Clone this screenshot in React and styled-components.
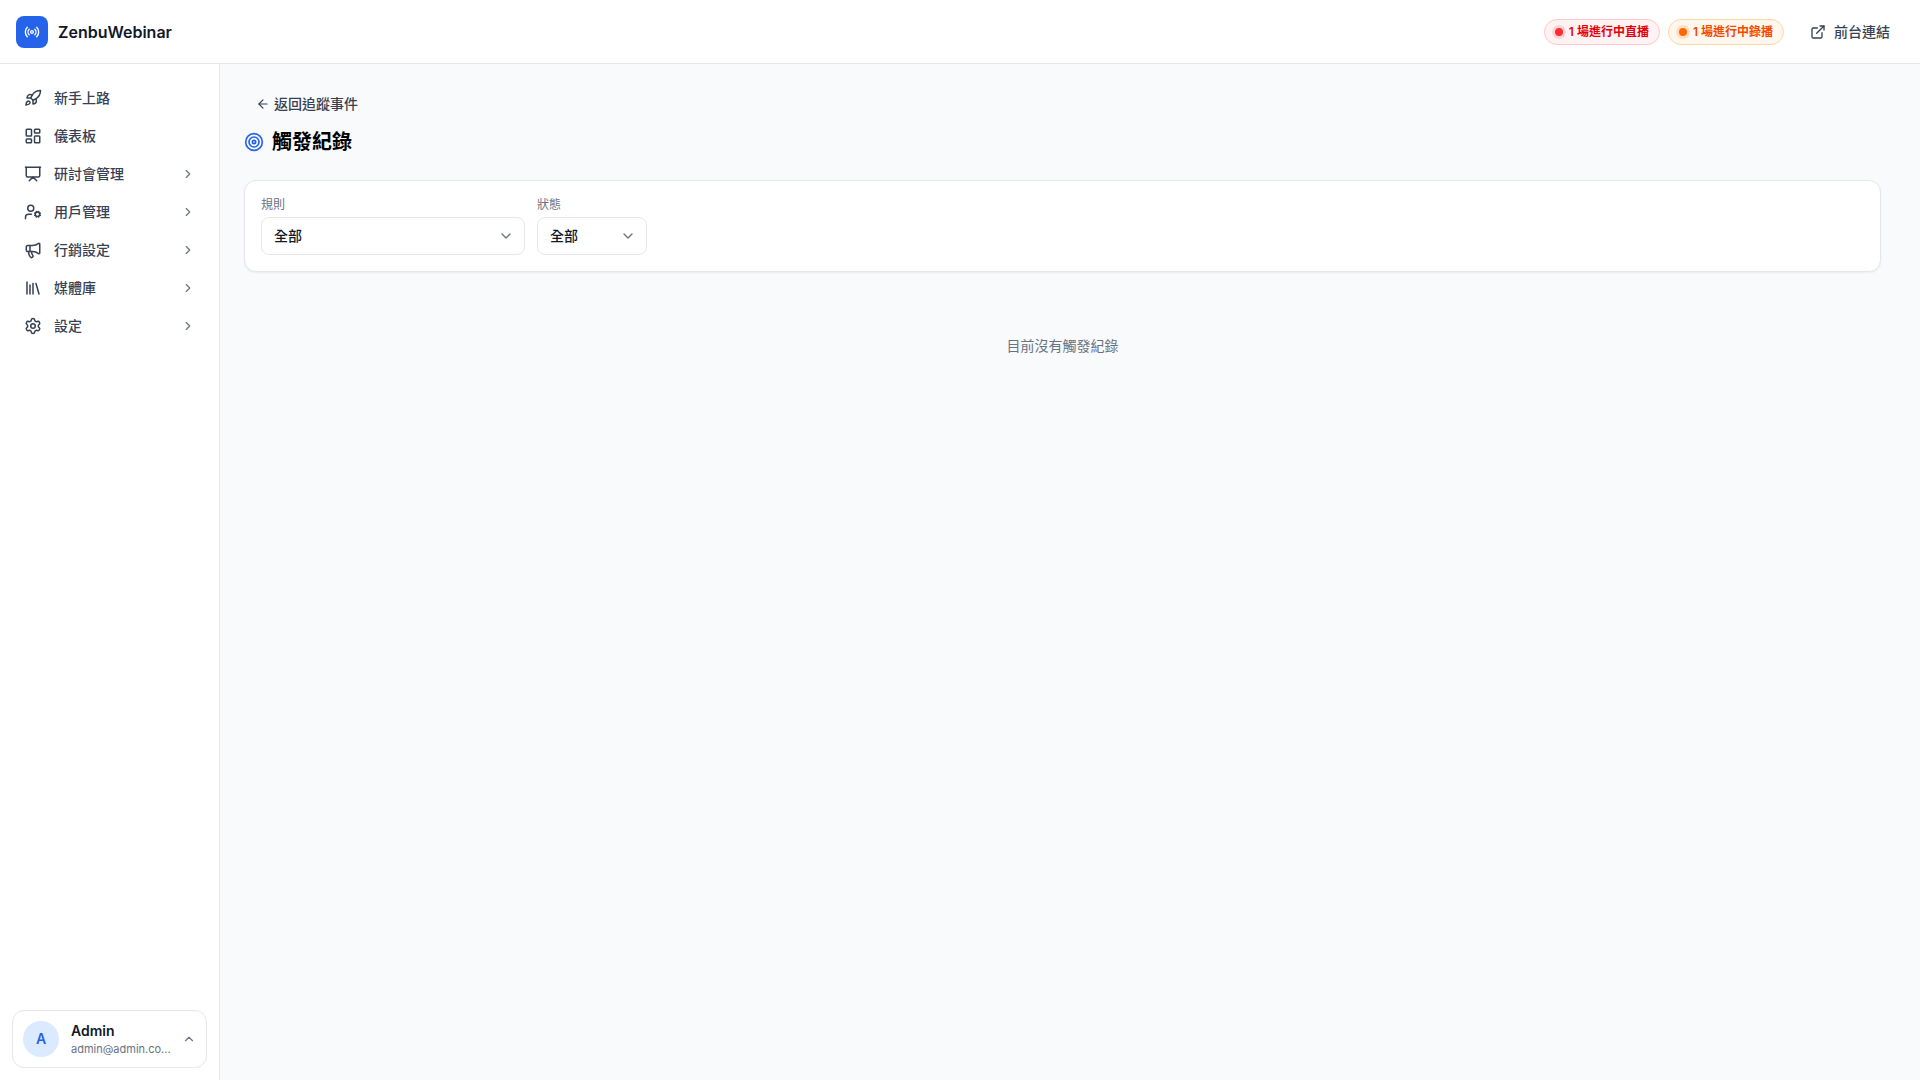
import React from 'react'
import styled, { createGlobalStyle, css } from 'styled-components'
import {
	ArrowLeft,
	ChevronDown,
	ChevronRight,
	ChevronUp,
	ExternalLink,
	LayoutDashboard,
	Library,
	Megaphone,
	Presentation,
	Radio,
	Rocket,
	Settings,
	Target,
	UserCog,
} from 'lucide-react'

const colors = {
	main: '#2563eb',
	mainLight: '#dbeafe',
	page: '#f9fafb',
	border: '#e5e7eb',
	heading: '#101828',
	text: '#364153',
	muted: '#6a7282',
}

const GlobalStyle = createGlobalStyle`
	*, *::before, *::after {
		box-sizing: border-box;
	}

	body {
		margin: 0;
		background: ${colors.page};
		color: ${colors.heading};
		font-family: Inter, 'Noto Sans CJK TC', sans-serif;
		font-size: 14px;
		line-height: 20px;
	}

	button, select {
		font: inherit;
		color: inherit;
	}

	a {
		color: inherit;
		text-decoration: none;
	}

	h1, p {
		margin: 0;
	}

	svg {
		display: block;
		flex-shrink: 0;
	}
`

const Layout = styled.div`
	display: flex;
	flex-direction: column;
	min-height: 100vh;
`

const TopBar = styled.header`
	display: flex;
	align-items: center;
	justify-content: space-between;
	height: 64px;
	padding: 0 16px;
	background: #fff;
	border-bottom: 1px solid ${colors.border};
`

const Brand = styled.a`
	display: flex;
	align-items: center;
	gap: 10px;
	font-size: 16px;
	font-weight: 600;
`

const BrandMark = styled.span`
	display: grid;
	place-items: center;
	width: 32px;
	height: 32px;
	border-radius: 8px;
	background: ${colors.main};
	color: #fff;
`

const TopActions = styled.div`
	display: flex;
	align-items: center;
	gap: 8px;
`

const tones = {
	live: css`
		color: #e7000b;
		background: #fef2f2;
		border-color: #ffc9c9;
		--dot: #fb2c36;
		--halo: #ffd3d4;
	`,
	recorded: css`
		color: #f54900;
		background: #fff7ed;
		border-color: #ffd6a7;
		--dot: #ff6900;
		--halo: #ffdfc2;
	`,
}

const StatusPill = styled.button`
	display: flex;
	align-items: center;
	gap: 6px;
	padding: 4px 10px;
	border: 1px solid;
	border-radius: 13px;
	font-size: 12px;
	font-weight: 600;
	line-height: 16px;
	${({ $tone }) => tones[$tone]}

	&::before {
		content: '';
		width: 8px;
		height: 8px;
		border-radius: 50%;
		background: var(--dot);
		box-shadow: 0 0 0 3px var(--halo);
	}
`

const FrontLink = styled.a`
	display: flex;
	align-items: center;
	gap: 8px;
	margin-left: 4px;
	padding: 8px 14px;
	color: ${colors.text};
	font-weight: 500;
`

const Body = styled.div`
	display: flex;
	flex: 1;
`

const Sidebar = styled.aside`
	display: flex;
	flex-direction: column;
	justify-content: space-between;
	flex-shrink: 0;
	width: 220px;
	padding: 16px 12px 12px;
	background: #fff;
	border-right: 1px solid ${colors.border};
`

const Nav = styled.nav`
	display: flex;
	flex-direction: column;
	gap: 2px;
`

const NavItem = styled.a`
	display: flex;
	align-items: center;
	gap: 12px;
	padding: 8px 12px;
	border-radius: 8px;
	color: ${colors.text};
	font-weight: 500;

	span {
		flex: 1;
	}
`

const Arrow = styled(ChevronRight)`
	color: ${colors.muted};
`

const UserCard = styled.button`
	display: flex;
	align-items: center;
	gap: 12px;
	padding: 10px;
	background: #fff;
	border: 1px solid ${colors.border};
	border-radius: 12px;
	text-align: left;

	svg {
		color: ${colors.muted};
	}
`

const Avatar = styled.span`
	display: grid;
	place-items: center;
	flex: 0 0 36px;
	height: 36px;
	border-radius: 50%;
	background: ${colors.mainLight};
	color: ${colors.main};
	font-weight: 600;
`

const UserText = styled.span`
	flex: 1;
	min-width: 0;
`

const UserName = styled.span`
	display: block;
	font-weight: 600;
`

const UserEmail = styled.span`
	display: block;
	color: ${colors.muted};
	font-size: 11px;
	line-height: 16px;
	white-space: nowrap;
`

const Main = styled.main`
	flex: 1;
	min-width: 0;
	padding: 24px 39px 24px 24px;
`

const BackLink = styled.a`
	display: inline-flex;
	align-items: center;
	gap: 4px;
	height: 32px;
	padding: 0 12px;
	color: ${colors.text};
	font-weight: 500;
`

const Title = styled.h1`
	display: flex;
	align-items: center;
	gap: 8px;
	margin-top: 8px;
	color: #000;
	font-size: 20px;
	font-weight: 700;
	line-height: 28px;

	svg {
		color: ${colors.main};
	}
`

const FilterCard = styled.form`
	display: flex;
	flex-wrap: wrap;
	gap: 12px;
	margin-top: 24px;
	padding: 16px;
	background: #fff;
	border: 1px solid ${colors.border};
	border-radius: 12px;
	box-shadow: 0 1px 2px rgba(0, 0, 0, 0.06);
`

const Field = styled.div`
	display: flex;
	flex-direction: column;
	gap: 4px;
	width: ${({ $width }) => $width};

	label {
		color: ${colors.muted};
		font-size: 12px;
		line-height: 16px;
	}
`

const SelectBox = styled.div`
	display: grid;
	align-items: center;

	select, svg {
		grid-area: 1 / 1;
	}

	select {
		height: 38px;
		padding: 0 36px 0 12px;
		appearance: none;
		background: #fff;
		border: 1px solid ${colors.border};
		border-radius: 8px;
		font-weight: 500;
	}

	svg {
		justify-self: end;
		margin-right: 11px;
		color: ${colors.muted};
		pointer-events: none;
	}
`

const Empty = styled.p`
	margin-top: 24px;
	padding: 40px 0;
	color: ${colors.muted};
	text-align: center;
`

const navItems = [
	{ label: '新手上路', icon: Rocket },
	{ label: '儀表板', icon: LayoutDashboard },
	{ label: '研討會管理', icon: Presentation, nested: true },
	{ label: '用戶管理', icon: UserCog, nested: true },
	{ label: '行銷設定', icon: Megaphone, nested: true },
	{ label: '媒體庫', icon: Library, nested: true },
	{ label: '設定', icon: Settings, nested: true },
]

const SelectField = ({ id, label, width }) => (
	<Field $width={width}>
		<label htmlFor={id}>{label}</label>
		<SelectBox>
			<select id={id} defaultValue='all'>
				<option value='all'>全部</option>
			</select>
			<ChevronDown size={16} />
		</SelectBox>
	</Field>
)

const App = () => (
	<Layout>
		<GlobalStyle />
		<TopBar>
			<Brand href='#'>
				<BrandMark>
					<Radio size={16} />
				</BrandMark>
				ZenbuWebinar
			</Brand>
			<TopActions>
				<StatusPill type='button' $tone='live'>1 場進行中直播</StatusPill>
				<StatusPill type='button' $tone='recorded'>1 場進行中錄播</StatusPill>
				<FrontLink href='#'>
					<ExternalLink size={16} />
					前台連結
				</FrontLink>
			</TopActions>
		</TopBar>
		<Body>
			<Sidebar>
				<Nav>
					{navItems.map(({ label, icon: Icon, nested }) => (
						<NavItem key={label} href='#'>
							<Icon size={18} />
							<span>{label}</span>
							{nested && <Arrow size={14} />}
						</NavItem>
					))}
				</Nav>
				<UserCard type='button'>
					<Avatar>A</Avatar>
					<UserText>
						<UserName>Admin</UserName>
						<UserEmail>admin@admin.co...</UserEmail>
					</UserText>
					<ChevronUp size={14} />
				</UserCard>
			</Sidebar>
			<Main>
				<BackLink href='#'>
					<ArrowLeft size={14} />
					返回追蹤事件
				</BackLink>
				<Title>
					<Target size={20} />
					觸發紀錄
				</Title>
				<FilterCard>
					<SelectField id='rule' label='規則' width='264px' />
					<SelectField id='status' label='狀態' width='110px' />
				</FilterCard>
				<Empty>目前沒有觸發紀錄</Empty>
			</Main>
		</Body>
	</Layout>
)

export default App
